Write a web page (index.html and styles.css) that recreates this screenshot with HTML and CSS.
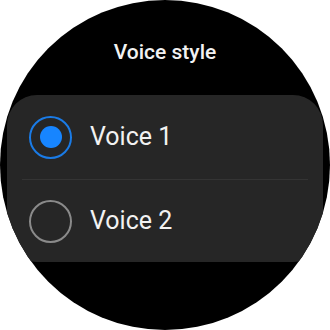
FILE: index.html
```html
<!DOCTYPE html>
<html>
<head>
<meta charset="utf-8">
<link rel="stylesheet" href="styles.css">
</head>
<body>
<div class="watch">
  <div class="title">Voice style</div>
  <div class="card">
    <div class="row">
      <span class="radio on"><span class="dot"></span></span>
      <span class="label">Voice 1</span>
    </div>
    <div class="divider"></div>
    <div class="row">
      <span class="radio"></span>
      <span class="label">Voice 2</span>
    </div>
  </div>
</div>
</body>
</html>
```
FILE: styles.css
```css
html, body {
  margin: 0;
  padding: 0;
  background: #ffffff;
}
.watch {
  width: 330px;
  height: 330px;
  border-radius: 50%;
  background: #000000;
  overflow: hidden;
  display: flex;
  flex-direction: column;
  align-items: center;
  padding-top: 40px;
  box-sizing: border-box;
  font-family: Roboto, "Liberation Sans", sans-serif;
  color: #f2f2f2;
}
.title {
  font-size: 21px;
  line-height: 24px;
  font-weight: 500;
  height: 24px;
}
.card {
  margin-top: 31px;
  width: 316px;
  height: 167px;
  background: #262626;
  border-radius: 30px;
  display: flex;
  flex-direction: column;
}
.row {
  height: 84px;
  display: flex;
  align-items: center;
  padding-left: 22px;
  gap: 18px;
}
.row:last-child {
  height: 82px;
}
.divider {
  height: 1px;
  background: #343434;
  margin: 0 15px;
}
.radio {
  width: 43px;
  height: 43px;
  box-sizing: border-box;
  border-radius: 50%;
  border: 2px solid #8a8a8a;
  display: flex;
  align-items: center;
  justify-content: center;
  flex: none;
}
.radio.on {
  border: 2px solid #1a7be6;
}
.dot {
  width: 22px;
  height: 22px;
  border-radius: 50%;
  background: #1785ff;
}
.label {
  font-size: 25px;
  line-height: 30px;
  color: #f2f2f2;
}
```
